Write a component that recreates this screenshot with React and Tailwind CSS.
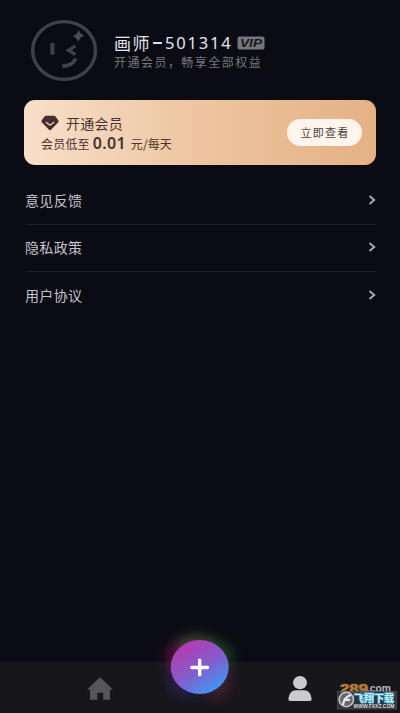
const MENU = ["意见反馈", "隐私政策", "用户协议"];

function Avatar() {
  return (
    <svg className="h-[65px] w-[68px] shrink-0" viewBox="0 0 68 65" fill="none">
      <ellipse cx="34.1" cy="32.5" rx="31.4" ry="28.9" stroke="#404048" strokeWidth="3.4" />
      <path d="M22.4 25 V36.5" stroke="#404048" strokeWidth="4.2" />
      <path d="M45.4 27.8 L38.5 32.3 L45.4 36.6" stroke="#404048" strokeWidth="3.4" />
      <path d="M45.8 40.5 C43.7 45 39.5 48 32.4 48.2" stroke="#404048" strokeWidth="4" />
      <path d="M48.8 11.8 Q49.8 16.7 54.3 17.4 Q50 18.7 48 24 Q47.2 19.2 42.5 18.2 Q47.4 16.8 48.8 11.8Z" fill="#4b4b53" />
    </svg>
  );
}

function Header() {
  return (
    <header className="flex h-[100px] pl-[30px] pt-[18px]">
      <Avatar />
      <div className="ml-4 pt-[13px]">
        <div className="flex h-[24px] items-center">
          <span className="whitespace-nowrap text-[17px] leading-[24px] tracking-[1.5px] text-[#e4e4ee]">
            画师
          </span>
          <span className="ml-[2px] mr-[3px] h-[1.5px] w-[9px] bg-[#dedee8]" />
          <span className="w-[68px] whitespace-nowrap font-['Noto_Sans'] text-[16.5px] leading-[24px] tracking-[1.8px] text-[#e4e4ee]">
            501314
          </span>
          <svg className="ml-[4px] h-[14px] w-[28px]" viewBox="0 0 28 14">
            <rect x="0.5" y="0.5" width="27" height="13" rx="2" fill="#77777a" />
            <text x="14" y="11.2" textAnchor="middle" textLength="22" lengthAdjust="spacingAndGlyphs" fontFamily="Liberation Sans" fontSize="11.5" fontWeight="bold" fontStyle="italic" fill="#15151d">
              VIP
            </text>
          </svg>
        </div>
        <p className="-mt-[2px] whitespace-nowrap text-[12px] leading-[18px] tracking-[1.47px] text-[#77777b]">
          开通会员，畅享全部权益
        </p>
      </div>
    </header>
  );
}

function MemberCard() {
  return (
    <section className="mx-6 flex h-[65px] shrink-0 items-center justify-between rounded-[11px] bg-linear-to-r from-[#f8dfca] via-[#edc5a0] to-[#e5b184] pl-[17px] pr-[14px]">
      <div className="pt-px text-[#493230]">
        <div className="flex h-[21px] items-center">
          <svg className="h-[16px] w-[18px]" viewBox="0 0 18 16">
            <path d="M4.8 0.8 H13.2 Q14 0.8 14.5 1.5 L17.4 5.5 Q18 6.3 17.3 7.2 L10 14.8 Q9 15.8 8 14.8 L0.7 7.2 Q0 6.3 0.6 5.5 L3.5 1.5 Q4 0.8 4.8 0.8Z" fill="#462e2e" />
            <path d="M5.3 7.5 L9 10.3 L12.7 7.5" fill="none" stroke="#f3d4ba" strokeWidth="1.3" strokeLinecap="round" />
          </svg>
          <span className="ml-[7px] text-[14px] leading-[21px] tracking-[0.25px]">开通会员</span>
        </div>
        <div className="flex h-[20px] items-baseline whitespace-nowrap text-[12px] leading-[20px]">
          <span className="tracking-[0.2px]">会员低至</span>
          <span className="-mt-px ml-[3px] w-[34px] font-['Noto_Sans'] text-[16px] font-semibold tracking-[0.3px]">0.01</span>
          <span className="ml-1 tracking-[0.1px]">元/每天</span>
        </div>
      </div>
      <button className="h-[27px] w-[75px] rounded-full bg-[#fff5ec] pl-px text-[11px] leading-[27px] tracking-[1.2px] text-[#4b403c]">
        立即查看
      </button>
    </section>
  );
}

function BottomBar() {
  return (
    <nav className="relative grid h-[51px] shrink-0 grid-cols-[200px_199px] bg-[#17171b]">
      <div className="flex justify-center pt-[15px]">
        <svg className="h-[24px] w-[26px]" viewBox="0 0 26 24">
          <path d="M13 0.2 L26 12.5 H23 V22.8 H16.2 V15.7 H10.3 V22.8 H3 V12.5 H0Z" fill="#56565a" />
        </svg>
      </div>
      <div className="flex justify-center pt-[13px]">
        <svg className="h-[27px] w-[24px]" viewBox="0 0 24 27">
          <ellipse cx="12" cy="7.7" rx="7" ry="6.6" fill="#cbcbcd" />
          <path d="M0.3 24 Q1.5 15.3 8 15.3 H16 Q22.5 15.3 23.7 24 Q23.7 26 21.5 26 H2.5 Q0.3 26 0.3 24Z" fill="#cbcbcd" />
        </svg>
      </div>
      <svg className="absolute -top-[42px] left-[140px] h-[93px] w-[120px]" viewBox="0 0 120 93">
        <defs>
          <linearGradient id="plusFill" x1="0.15" y1="0.1" x2="0.75" y2="1">
            <stop offset="0" stopColor="#b33bb0" />
            <stop offset="0.5" stopColor="#865bca" />
            <stop offset="1" stopColor="#389bf8" />
          </linearGradient>
          <filter id="glow" x="-60%" y="-60%" width="220%" height="220%">
            <feGaussianBlur stdDeviation="6" />
          </filter>
        </defs>
        <g filter="url(#glow)">
          <ellipse cx="42" cy="37" rx="17" ry="17" fill="#8b1456" opacity="0.45" />
          <ellipse cx="57" cy="26" rx="18" ry="11" fill="#5f7440" opacity="0.55" />
          <ellipse cx="77" cy="36" rx="16" ry="15" fill="#217b38" opacity="0.45" />
          <ellipse cx="76" cy="62" rx="16" ry="16" fill="#80255a" opacity="0.35" />
          <ellipse cx="45" cy="60" rx="18" ry="17" fill="#3e2192" opacity="0.38" />
        </g>
        <ellipse cx="59.7" cy="47" rx="29" ry="27" fill="url(#plusFill)" />
        <path d="M59.7 40.2 V54.8 M51.9 47.5 H67.5" stroke="#fff" strokeWidth="3.4" strokeLinecap="round" />
      </svg>
      <svg className="absolute bottom-0 left-[335px] h-[32px] w-[65px]" viewBox="0 0 65 32">
        <text x="5" y="12" textLength="28" lengthAdjust="spacingAndGlyphs" fontFamily="Liberation Sans" fontWeight="bold" fontSize="12" fill="#b77735" stroke="#b77735" strokeWidth="0.7">289</text>
        <text x="32" y="10.5" textLength="24" lengthAdjust="spacingAndGlyphs" fontFamily="Liberation Sans" fontWeight="bold" fontSize="11" fill="#b5bbc2">.com</text>
        <rect x="2.5" y="10.5" width="59" height="17.5" fill="#363a3e" fillOpacity="0.8" stroke="#53575b" strokeWidth="0.7" />
        <circle cx="11.3" cy="18.5" r="7.2" fill="#65696d" stroke="#c5c9cc" strokeWidth="1.5" />
        <path d="M8 24 Q9 16 16 14 M8.7 18.8 H15" fill="none" stroke="#e8eaec" strokeWidth="2.2" />
        <text x="19" y="20.8" textLength="40" lengthAdjust="spacingAndGlyphs" fontFamily="Noto Sans CJK SC" fontWeight="bold" fontSize="10" fill="#d5eef8" stroke="#2b91b6" strokeWidth="1.6" paintOrder="stroke">飞翔下载</text>
        <text x="18.5" y="27" textLength="41" lengthAdjust="spacingAndGlyphs" fontFamily="Liberation Sans" fontWeight="bold" fontSize="4.8" fill="#dedede">WWW.FXXZ.COM</text>
      </svg>
    </nav>
  );
}

export default function App() {
  return (
    <div lang="zh-CN" className="flex h-[713px] w-[400px] flex-col overflow-hidden bg-[#0b0b14] font-['Noto_Sans_CJK_SC',sans-serif]">
      <Header />
      <MemberCard />
      <main className="ml-[25px] mr-6 mt-[12px] flex-1">
        {MENU.map((label, i) => (
          <div
            key={label}
            className={`flex items-center justify-between pb-[2px] ${i === 0 ? "h-[48px]" : "h-[47px]"} ${i < 2 ? "border-b border-[#20202a]" : ""}`}
          >
            <span className="text-[14px] leading-[20px] tracking-[0.35px] text-[#c4c4cc]">{label}</span>
            <svg className="h-[10px] w-[8px]" viewBox="0 0 8 10">
              <path d="M1.5 1 L6.2 5 L1.5 9" fill="none" stroke="#aaaab3" strokeWidth="1.9" />
            </svg>
          </div>
        ))}
      </main>
      <BottomBar />
    </div>
  );
}
